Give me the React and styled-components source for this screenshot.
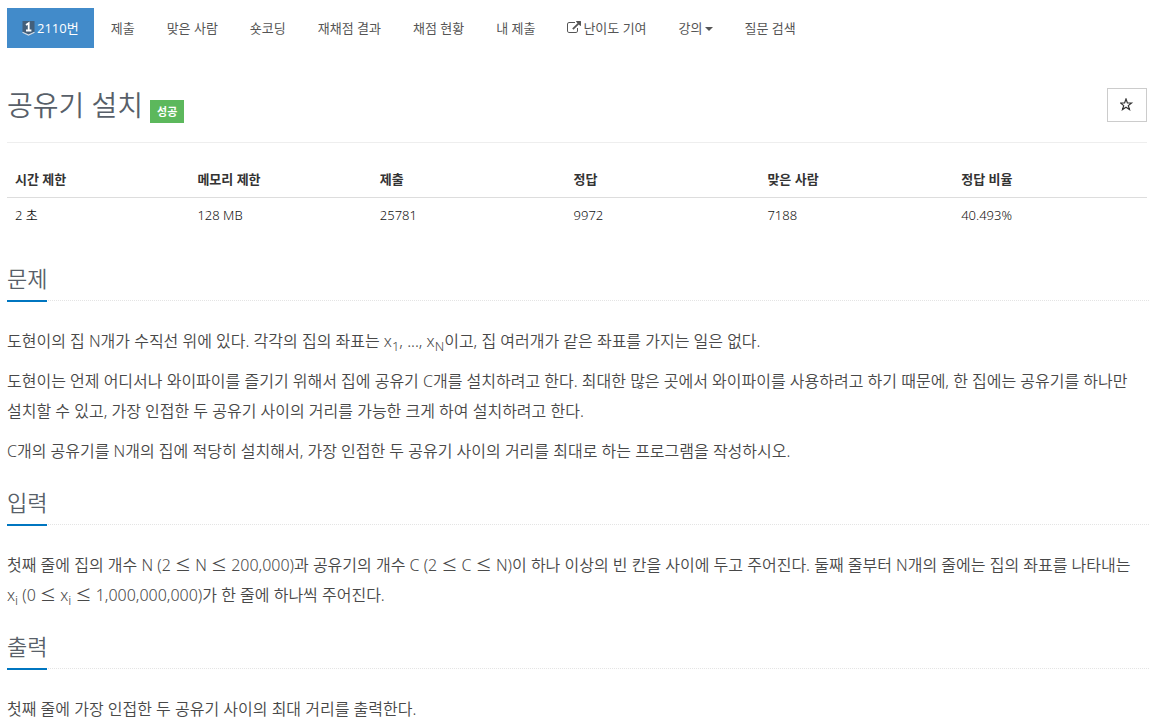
import React from "react";
import styled, { createGlobalStyle } from "styled-components";

const Global = createGlobalStyle`
  * { box-sizing: border-box; }
  body {
    margin: 0;
    background: #fff;
    color: #333;
    font-family: "Open Sans", "Noto Sans CJK KR", sans-serif;
    font-size: 13px;
    line-height: 20px;
  }
`;
const Page = styled.main`padding: 8px 20px 0 7px;`;
const Nav = styled.nav`display: flex; gap: 2px;`;
const NavLink = styled.a`
  display: flex;
  align-items: center;
  gap: 2px;
  padding: 10px 15px;
  white-space: nowrap;
  text-decoration: none;
  font-size: 13px;
  line-height: 20px;
  color: ${(p) => (p.$active ? "#fff" : "#555")};
  background: ${(p) => (p.$active ? "#428bca" : "transparent")};
`;
const Header = styled.header`
  display: flex;
  justify-content: space-between;
  margin: 40px 2px 0 0;
  padding-bottom: 19px;
  border-bottom: 1px solid #eee;
`;
const TitleRow = styled.div`display: flex; align-items: flex-start; gap: 7px;`;
const Title = styled.h1`
  margin: 0;
  font-size: 28px;
  font-weight: 350;
  line-height: 34px;
  color: #585f69;
`;
const Label = styled.span`
  margin-top: 12px;
  padding: 2px 7px;
  background: #5cb85c;
  color: #fff;
  font-size: 11px;
  line-height: 19px;
  font-weight: 700;
`;
const StarButton = styled.button`
  width: 40px;
  height: 34px;
  display: grid;
  place-items: center;
  border: 1px solid #ccc;
  background: #fff;
  color: #333;
  padding: 0;
`;
const TableWrap = styled.div`margin: 19px 2px 34px 0;`;
const Table = styled.table`
  width: 100%;
  border-collapse: collapse;
  table-layout: fixed;
`;
const Cell = styled.td`
  padding: 8px;
  font-family: "Noto Sans", "Noto Sans CJK KR", sans-serif;
  font-size: 13px;
  font-weight: 350;
  line-height: 19px;
  text-align: left;
  color: #111;
`;
const HeadCell = styled(Cell)`border-bottom: 1px solid #ddd; font-weight: 700; color: #333;`;
const Section = styled.section``;
const Headline = styled.div`
  display: flex;
  margin: 25px 0;
  border-bottom: 1px dotted #e4e4e4;
`;
const H2 = styled.h2`
  margin: 0 0 -2px;
  padding-bottom: 11px;
  border-bottom: 2px solid #0076c0;
  font-size: 22px;
  font-weight: 350;
  line-height: 22px;
  color: #585f69;
`;
const P = styled.p`
  margin: 0 0 10px;
  font-family: "Noto Sans", "Noto Sans CJK KR", sans-serif;
  font-size: 16px;
  font-weight: 350;
  line-height: 30px;
  color: #484848;
  word-break: keep-all;
  sub { font-size: 13px; line-height: 0; }
`;
const Le = styled.span`font-family: "Noto Sans CJK KR", sans-serif; line-height: 0;`;
const Term = styled.span`white-space: nowrap;`;

const columns = [
  ["시간 제한", "2 초", "16%"],
  ["메모리 제한", "128 MB", "16%"],
  ["제출", "25781", "17%"],
  ["정답", "9972", "17%"],
  ["맞은 사람", "7188", "17%"],
  ["정답 비율", "40.493%", "17%"],
];

const Tier = () => (
  <svg width="13" height="16" viewBox="0 0 13 16" aria-hidden="true">
    <path d="M.5 1h12v11l-6 3-6-3z" fill="#435f7a" />
    <path d="M.5 12.200l6 2.800 6-2.800" stroke="#d5dde6" strokeWidth="1.200" fill="none" />
    <path d="M4 5L6.700 3.200V10.500M4 10.500h5.400" stroke="#fff" strokeWidth="1.800" fill="none" />
  </svg>
);
const External = () => (
  <svg width="14" height="14" viewBox="0 0 1792 1792" fill="currentColor" aria-hidden="true">
    <path d="M1408 928v320q0 119-84.500 203.500T1120 1536H288q-119 0-203.500-84.500T0 1248V416q0-119 84.500-203.500T288 128h704q14 0 23 9t9 23v64q0 14-9 23t-23 9H288q-66 0-113 47t-47 113v832q0 66 47 113t113 47h832q66 0 113-47t47-113V928q0-14 9-23t23-9h64q14 0 23 9t9 23zm384-864v512q0 26-19 45t-45 19-45-19l-176-176-652 652q-10 10-23 10t-23-10L695 983q-10-10-10-23t10-23l652-652-176-176q-19-19-19-45t19-45 45-19h512q26 0 45 19t19 45z" />
  </svg>
);
const Caret = () => (
  <svg width="8" height="6" viewBox="0 0 8 6" fill="currentColor" aria-hidden="true"><path d="M0 2h8L4 6z" /></svg>
);
const Star = () => (
  <svg width="14" height="14" viewBox="0 0 14 14" aria-hidden="true">
    <path d="M6 1l1.400 4h4.100L8.300 7.600l1.200 4L6 9.200l-3.500 2.400 1.200-4L.5 5h4.100z" fill="none" stroke="currentColor" strokeWidth="1.200" />
  </svg>
);

export default function App() {
  return (
    <>
      <Global />
      <Page>
        <Nav>
          <NavLink href="#" $active><Tier />2110번</NavLink>
          <NavLink href="#">제출</NavLink>
          <NavLink href="#">맞은 사람</NavLink>
          <NavLink href="#">숏코딩</NavLink>
          <NavLink href="#">재채점 결과</NavLink>
          <NavLink href="#">채점 현황</NavLink>
          <NavLink href="#">내 제출</NavLink>
          <NavLink href="#"><External />난이도 기여</NavLink>
          <NavLink href="#">강의<Caret /></NavLink>
          <NavLink href="#">질문 검색</NavLink>
        </Nav>
        <Header>
          <TitleRow><Title>공유기 설치</Title><Label>성공</Label></TitleRow>
          <StarButton aria-label="즐겨찾기"><Star /></StarButton>
        </Header>
        <TableWrap>
          <Table>
            <colgroup>{columns.map(([n, , w]) => <col key={n} style={{ width: w }} />)}</colgroup>
            <thead><tr>{columns.map(([n]) => <HeadCell as="th" key={n}>{n}</HeadCell>)}</tr></thead>
            <tbody><tr>{columns.map(([n, v]) => <Cell key={n}>{v}</Cell>)}</tr></tbody>
          </Table>
        </TableWrap>
        <Section>
          <Headline><H2>문제</H2></Headline>
          <P>도현이의 집 N개가 수직선 위에 있다. 각각의 집의 좌표는 x<sub>1</sub>, ..., x<sub>N</sub>이고, 집 여러개가 같은 좌표를 가지는 일은 없다.</P>
          <P>도현이는 언제 어디서나 와이파이를 즐기기 위해서 집에 공유기 C개를 설치하려고 한다. 최대한 많은 곳에서 와이파이를 사용하려고 하기 때문에, 한 집에는 공유기를 하나만 설치할 수 있고, 가장 인접한 두 공유기 사이의 거리를 가능한 크게 하여 설치하려고 한다.</P>
          <P>C개의 공유기를 N개의 집에 적당히 설치해서, 가장 인접한 두 공유기 사이의 거리를 최대로 하는 프로그램을 작성하시오.</P>
        </Section>
        <Section>
          <Headline><H2>입력</H2></Headline>
          <P>첫째 줄에 집의 개수 N (2 <Le>≤</Le> N <Le>≤</Le> 200,000)과 공유기의 개수 C (2 <Le>≤</Le> C <Le>≤</Le> N)이 하나 이상의 빈 칸을 사이에 두고 주어진다. 둘째 줄부터 N개의 줄에는 집의 좌표를 나타내는 <Term>x<sub>i</sub> (0 <Le>≤</Le> x<sub>i</sub></Term> <Le>≤</Le> 1,000,000,000)가 한 줄에 하나씩 주어진다.</P>
        </Section>
        <Section>
          <Headline><H2>출력</H2></Headline>
          <P>첫째 줄에 가장 인접한 두 공유기 사이의 최대 거리를 출력한다.</P>
        </Section>
      </Page>
    </>
  );
}
